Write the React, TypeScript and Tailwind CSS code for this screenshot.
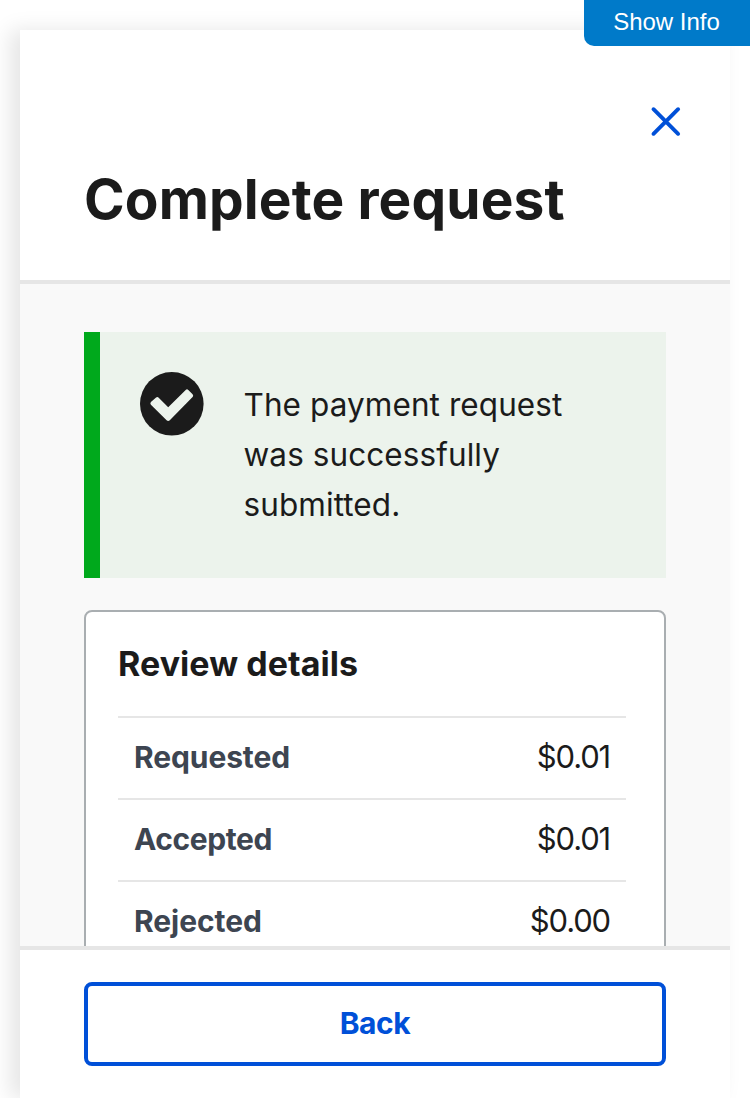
const rows = [
  { label: 'Requested', value: '$0.01', labelClass: 'tracking-[-0.1px]' },
  { label: 'Accepted', value: '$0.01', labelClass: 'tracking-[-0.4px]' },
  { label: 'Rejected', value: '$0.00', labelClass: 'tracking-[-0.05px]' },
];

export default function App() {
  return (
    <div className="relative h-[1098px] w-[750px] overflow-hidden bg-white pt-[30px] pr-5 pl-5 font-['Inter',sans-serif] text-[#1b1b1b]">
      <button className="absolute top-0 right-0 h-[46px] w-[166px] rounded-bl-[10px] bg-[#007ac9] pr-px pb-0.5 text-center font-['Liberation_Sans',sans-serif] text-[24px] text-white">
        Show Info
      </button>
      <section className="flex h-[1068px] w-[710px] flex-col bg-white shadow-[-10px_0_20px_rgba(0,0,0,0.1)]">
        <header className="h-[254px] shrink-0 border-b-4 border-[#e6e6e6] px-16 pt-[76px]">
          <div className="flex justify-end pr-[-14px]">
            <button aria-label="Close" className="-mr-4">
              <svg className="block h-8 w-8" viewBox="0 0 32 32" fill="none" stroke="#0050d8" strokeWidth="3.9" strokeLinecap="round">
                <path d="M3.5 3.2 28.1 27.8M28.1 3.2 3.5 27.8" />
              </svg>
            </button>
          </div>
          <h2 className="mt-[27px] text-[55px] leading-[68px] font-bold tracking-[0.12px] whitespace-nowrap">Complete request</h2>
        </header>
        <main className="min-h-0 flex-1 overflow-hidden bg-[#f9f9f9] px-16 pt-12">
          <div className="flex h-[246px] border-l-[16px] border-[#00a91c] bg-[#ecf3ec] pt-10 pl-10">
            <svg className="h-16 w-16 shrink-0" viewBox="0 0 64 64">
              <circle cx="31.8" cy="31.8" r="31.8" fill="#1b1b1b" />
              <path d="M10.9 30.1 16.1 25.5Q17.5 24.6 18.7 25.7L28.2 35.2 45.7 17.9Q47 16.7 48.3 17.9L52.6 22.2Q53.8 23.6 52.6 25L29.8 48.2Q28.2 49.8 26.6 48.2L10.9 32.8Q9.8 31.5 10.9 30.1Z" fill="#ecf3ec" />
            </svg>
            <p className="ml-[39.5px] pt-2 text-[31.5px] leading-[50px] tracking-[0.08px]">
              The payment request<br />was successfully<br />submitted.
            </p>
          </div>
          <div className="mt-8 h-[500px] rounded-lg border-2 border-[#a9aeb1] bg-white pt-[29px] pr-[38px] pl-8">
            <h3 className="text-[34px] leading-[46px] font-bold tracking-[0.05px]">Review details</h3>
            <dl className="mt-[29px]">
              {rows.map((row) => (
                <div key={row.label} className="flex h-[82px] items-center justify-between border-t-2 border-[#e6e6e6] px-4 pb-[2px]">
                  <dt className={`text-[30px] font-bold text-[#3d4551] ${row.labelClass}`}>{row.label}</dt>
                  <dd className="text-[31px] tracking-[-1.15px]">{row.value}</dd>
                </div>
              ))}
            </dl>
          </div>
        </main>
        <footer className="h-[152px] shrink-0 border-t-4 border-[#e6e6e6] px-16 pt-8">
          <button className="h-[84px] w-full rounded-lg border-4 border-[#0050d8] pb-[2px] text-[30px] font-bold tracking-[-0.4px] text-[#0050d8]">Back</button>
        </footer>
      </section>
    </div>
  );
}
